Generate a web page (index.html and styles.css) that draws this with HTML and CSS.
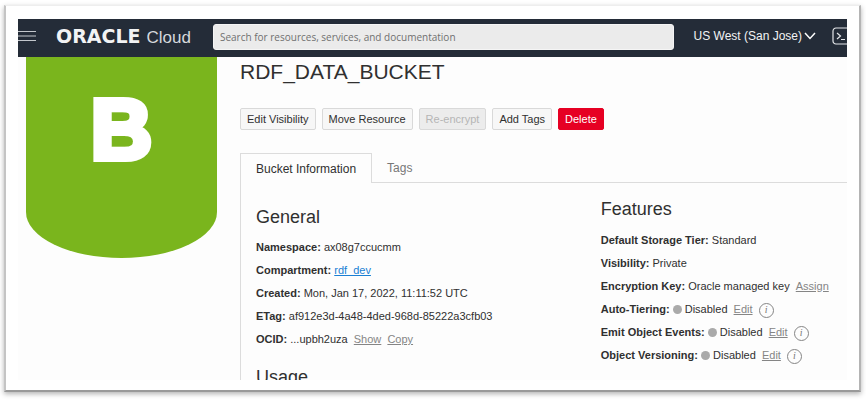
FILE: index.html
```html
<!DOCTYPE html>
<html lang="en">
<head>
<meta charset="utf-8">
<title>RDF_DATA_BUCKET</title>
<link rel="stylesheet" href="styles.css">
</head>
<body>
<div class="frame">
  <div class="screen">
    <header class="topbar">
      <button class="icon-button menu" type="button" aria-label="Menu">
        <svg width="18" height="12" viewBox="0 0 18 12" fill="none" stroke="#c3c7cc"><path d="M0 1.5h18M0 6h18M0 10.5h18"/></svg>
      </button>
      <a class="brand" href="#"><span class="brand-name">ORACLE</span><span class="brand-product">Cloud</span></a>
      <input class="search" type="search" aria-label="Search" placeholder="Search for resources, services, and documentation">
      <button class="region" type="button">US West (San Jose)
        <svg width="12" height="8" viewBox="0 0 12 8" fill="none" stroke="#fff" stroke-width="1.5"><path d="M1 1l5 5.5L11 1"/></svg>
      </button>
      <button class="icon-button console" type="button" aria-label="Cloud Shell">
        <svg width="20" height="18" viewBox="0 0 20 18" fill="none" stroke="#e4e6e9" stroke-width="1.2"><rect x="1" y="1" width="18" height="16" rx="3"/><path d="M5 6l3.500 3L5 12M9 12.500h4"/></svg>
      </button>
    </header>
    <div class="page">
      <aside class="side"><div class="badge">B</div></aside>
      <main class="main">
        <h1>RDF_DATA_BUCKET</h1>
        <div class="actions">
          <button type="button">Edit Visibility</button>
          <button type="button">Move Resource</button>
          <button type="button" disabled>Re-encrypt</button>
          <button type="button">Add Tags</button>
          <button type="button" class="danger">Delete</button>
        </div>
        <div class="tabs" role="tablist">
          <button class="tab active" type="button" role="tab" aria-selected="true">Bucket Information</button>
          <button class="tab" type="button" role="tab" aria-selected="false">Tags</button>
        </div>
        <div class="panel">
          <section class="general">
            <h2>General</h2>
            <p><b>Namespace:</b> ax08g7ccucmm</p>
            <p><b>Compartment:</b> <a class="link" href="#">rdf_dev</a></p>
            <p><b>Created:</b> Mon, Jan 17, 2022, 11:11:52 UTC</p>
            <p><b>ETag:</b> af912e3d-4a48-4ded-968d-85222a3cfb03</p>
            <p><b>OCID:</b> ...upbh2uza <a class="action" href="#">Show</a> <a class="action" href="#">Copy</a></p>
            <h2 class="usage">Usage</h2>
          </section>
          <section class="features">
            <h2>Features</h2>
            <p><b>Default Storage Tier:</b> Standard</p>
            <p><b>Visibility:</b> Private</p>
            <p><b>Encryption Key:</b> Oracle managed key <a class="action" href="#">Assign</a></p>
            <p><b>Auto-Tiering:</b> <span class="dot"></span> Disabled <a class="action" href="#">Edit</a> <button class="info" type="button" aria-label="About auto-tiering">i</button></p>
            <p><b>Emit Object Events:</b> <span class="dot"></span> Disabled <a class="action" href="#">Edit</a> <button class="info" type="button" aria-label="About object events">i</button></p>
            <p><b>Object Versioning:</b> <span class="dot"></span> Disabled <a class="action" href="#">Edit</a> <button class="info" type="button" aria-label="About versioning">i</button></p>
          </section>
        </div>
      </main>
    </div>
  </div>
</div>
</body>
</html>
```
FILE: styles.css
```css
* { box-sizing: border-box; }

body {
  margin: 0;
  height: 100vh;
  padding: 5px 5px 8px 4px;
  background: #fff;
  color: #303030;
  font: 11px/24px "Liberation Sans", Arial, sans-serif;
}

button { font: inherit; color: inherit; cursor: pointer; }

.frame {
  height: 100%;
  padding: 13px 12px 10px;
  background: #fff;
  border: 2px solid #c4c4c4;
  border-top: 1px solid #eee;
  border-right-color: #b4b4b4;
  border-bottom-color: #999;
  box-shadow: 0 2px 5px rgba(0, 0, 0, .3);
}

.screen {
  display: flex;
  flex-direction: column;
  height: 100%;
  overflow: hidden;
  background: #fdfdfd;
}

/* Top bar */
.topbar {
  display: flex;
  flex: none;
  align-items: center;
  height: 38px;
  background: #242c38;
  color: #f2f3f4;
}

.icon-button {
  display: flex;
  flex: none;
  padding: 0;
  border: 0;
  background: none;
}

.menu { margin-bottom: 4px; }
.console { width: 15px; margin-bottom: 4px; overflow: hidden; }
.console svg { flex: none; }

.brand {
  display: flex;
  align-items: baseline;
  gap: 6px;
  margin: 0 22px 2px 20px;
  color: #f2f3f4;
  text-decoration: none;
}

.brand-name { font: bold 19px/24px "DejaVu Sans", sans-serif; }
.brand-product { font-size: 17px; color: #d5d8dc; }

.search {
  flex: 1;
  min-width: 0;
  height: 26px;
  margin-bottom: 2px;
  padding: 0 6px;
  border: 1px solid #f5f5f5;
  border-radius: 3px;
  background: #ebebeb;
  font: 10px "Open Sans", sans-serif;
}

.search::placeholder { color: #707070; opacity: 1; }

.region {
  display: flex;
  align-items: center;
  gap: 2px;
  margin: 0 16px 4px 20px;
  padding: 0;
  border: 0;
  background: none;
  font-size: 12px;
}

/* Page */
.page { display: flex; }
.side { flex: none; width: 222px; padding-left: 8px; }

.badge {
  width: 191px;
  height: 201px;
  border-radius: 0 0 50% 50% / 0 0 46px 46px;
  background: #7ab51d;
  color: #fff;
  font: bold 85px/146px "Liberation Sans", Arial, sans-serif;
  -webkit-text-stroke: 6px #fff;
  text-align: center;
}

.main { flex: 1; min-width: 0; }

h1 {
  margin: 3px 0 24px;
  font-size: 21px;
  font-weight: normal;
  line-height: 24px;
}

.actions { display: flex; gap: 6px; }

.actions button {
  height: 22px;
  padding: 0 6px;
  border: 1px solid #d9d9d9;
  border-radius: 2px;
  background: #f7f7f7;
  line-height: 20px;
}

.actions button:disabled { background: #ececec; color: #b5b5b5; }
.actions .danger { border-color: #e60023; background: #e60023; color: #fff; }

.tabs {
  display: flex;
  margin-top: 23px;
  border-bottom: 1px solid #dcdcdc;
}

.tab {
  height: 29px;
  padding: 0 15px;
  border: 0;
  background: none;
  color: #777;
  font-size: 12px;
}

.active {
  margin-bottom: -1px;
  height: 30px;
  border: 1px solid #dcdcdc;
  border-bottom: 0;
  background: #fdfdfd;
  color: #303030;
}

.panel {
  display: grid;
  grid-template-columns: 7fr 5fr;
  padding-left: 15px;
  border-left: 1px solid #dcdcdc;
}

h2 {
  margin: 0;
  font-size: 18px;
  font-weight: normal;
  line-height: 24px;
}

p { margin: 0; white-space: nowrap; }

.general { padding-top: 22px; line-height: 23px; }
.general h2 { margin-bottom: 7px; }
.general .usage { margin: 14px 0 0; }
.features { padding-top: 14px; line-height: 23px; }
.features h2 { margin-bottom: 8px; }

.link { color: #1a7fd4; }
.action { margin-left: 3px; color: #858585; }

.dot {
  display: inline-block;
  width: 9px;
  height: 9px;
  border-radius: 50%;
  background: #aaa;
  vertical-align: -1px;
}

.info {
  width: 15px;
  height: 15px;
  margin-left: 3px;
  padding: 0;
  border: 1px solid #858585;
  border-radius: 50%;
  background: none;
  color: #777;
  font: italic 10px/12px "Liberation Serif", serif;
  vertical-align: middle;
}
```
